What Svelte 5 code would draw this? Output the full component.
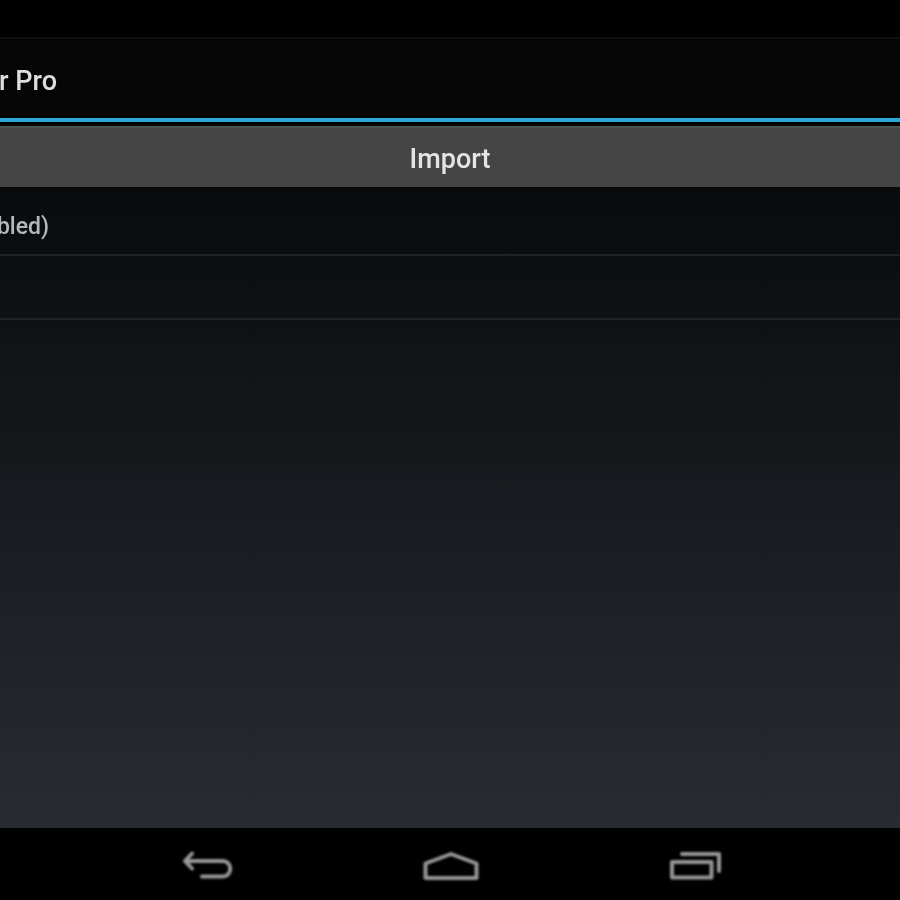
<script lang="ts">
    const rows = [{ text: 'bled)' }, { text: '' }];
</script>

<main class="screen">
    <header class="action-bar">
        <div class="clip title">r Pro</div>
    </header>
    <div class="accent"></div>
    <button class="import"><span>Import</span></button>

    <section class="content">
        {#each rows as row}
            <div class="row">
                {#if row.text}
                    <div class="clip label">{row.text}</div>
                {/if}
            </div>
        {/each}
    </section>

    <nav class="nav-bar">
        <svg class="back" viewBox="0 0 50 30" width="50" height="30" aria-label="Back">
            <path d="M9 2.500 2 10l7 7.500M2 10h37c11 0 11 15.500 0 15.500H19" />
        </svg>
        <svg class="home" viewBox="0 0 56 30" width="56" height="30" aria-label="Home">
            <path d="M2.500 27V12.500L28 3l25.500 9.500V27Z" />
        </svg>
        <svg class="recents" viewBox="0 0 54 30" width="54" height="30" aria-label="Recents">
            <path d="M13 3h37v17" />
            <path d="M3 11h39.500v15.500H3Z" />
        </svg>
    </nav>
</main>

<style>
    :global(body) {
        margin: 0;
        background: #000;
    }

    .screen {
        width: 900px;
        height: 900px;
        display: flex;
        flex-direction: column;
        overflow: hidden;
        font-family: Roboto, "Liberation Sans", sans-serif;
        background: #000;
    }

    .action-bar {
        box-sizing: border-box;
        height: 81px;
        margin-top: 37px;
        padding-top: 6px;
        flex: none;
        display: flex;
        align-items: flex-start;
        background: #050505;
        border-top: 2px solid #0e0e0e;
    }

    .title {
        width: 57px;
        height: 73px;
        line-height: 73px;
        font-size: 27px;
        font-weight: 500;
        color: #dedede;
        filter: blur(0.7px);
    }

    .clip {
        display: flex;
        justify-content: flex-end;
        white-space: nowrap;
        overflow: hidden;
    }

    .accent {
        height: 4px;
        flex: none;
        background: #2ea6d6;
        filter: blur(0.4px);
    }

    .import {
        margin-top: 4px;
        height: 61px;
        flex: none;
        padding: 2px 0 0;
        border: 0;
        border-top: 2px solid #505050;
        background: #454545;
        color: #e4e4e4;
        font-family: inherit;
        font-size: 27px;
        font-weight: 500;
        text-align: center;
    }

    .import span {
        display: inline-block;
        filter: blur(0.7px);
    }

    .content {
        flex: 1;
        padding-top: 5px;
        background: linear-gradient(#090a0c, #282c32);
    }

    .row {
        box-sizing: border-box;
        height: 64px;
        display: flex;
        align-items: center;
        border-bottom: 2px solid #202225;
    }

    .row:first-child {
        padding-top: 6px;
    }

    .label {
        width: 49px;
        font-size: 23px;
        font-weight: 500;
        color: #b8b8b8;
        filter: blur(0.7px);
    }

    .nav-bar {
        height: 72px;
        flex: none;
        padding: 4px 0 0 5px;
        box-sizing: border-box;
        background: #000;
        display: flex;
        align-items: center;
        justify-content: center;
        gap: 190px;
    }

    .nav-bar svg {
        fill: none;
        stroke: #969696;
        stroke-width: 4;
        stroke-linecap: round;
        stroke-linejoin: round;
        filter: blur(0.8px);
    }
</style>
